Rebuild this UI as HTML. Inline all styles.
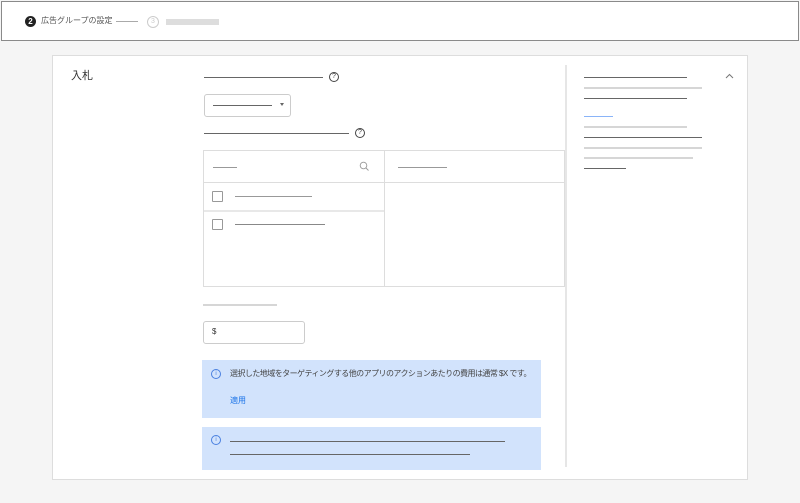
<!DOCTYPE html><html><head><meta charset="utf-8"><style>
*{margin:0;padding:0;box-sizing:border-box}
body{width:800px;height:503px;background:#f5f5f5;position:relative;overflow:hidden;font-family:"Liberation Sans","Noto Sans CJK JP",sans-serif}
.a{position:absolute}
.l{position:absolute;height:1px;background:#666}
.g{position:absolute;height:2px;background:#d6d6d6}
</style></head><body>
<div class="a" style="left:1px;top:1px;width:798px;height:40px;background:#fff;border:1px solid #8a8a8a"></div>
<div class="a" style="left:25px;top:16px;width:11px;height:11px;border-radius:50%;background:#222;color:#fff;font-size:8px;font-weight:bold;text-align:center;line-height:11px">2</div>
<div class="a" style="left:41px;top:15px;font-size:8px;color:#555;white-space:nowrap">広告グループの設定</div>
<div class="a" style="left:116px;top:21px;width:22px;height:1px;background:#aaa"></div>
<div class="a" style="left:147px;top:16px;width:12px;height:12px;border-radius:50%;border:1px solid #ccc;color:#ccc;font-size:7px;text-align:center;line-height:10px">3</div>
<div class="a" style="left:166px;top:19px;width:53px;height:6px;background:#ddd"></div>

<div class="a" style="left:52px;top:55px;width:696px;height:425px;background:#fff;border:1px solid #ddd"></div>
<div class="a" style="left:565px;top:65px;width:2px;height:402px;background:#e6e6e6"></div>
<div class="a" style="left:71px;top:67px;font-size:11px;color:#333">入札</div>

<div class="l" style="left:204px;top:77px;width:119px"></div>
<div class="a" style="left:329px;top:72px;width:10px;height:10px;border-radius:50%;border:1px solid #444;font-size:7px;text-align:center;line-height:8px;color:#444">?</div>
<div class="a" style="left:204px;top:94px;width:87px;height:23px;border:1px solid #ccc;border-radius:3px"></div>
<div class="l" style="left:213px;top:105px;width:59px"></div>
<div class="a" style="left:280px;top:103px;border-left:2px solid transparent;border-right:2px solid transparent;border-top:3px solid #666"></div>
<div class="l" style="left:204px;top:133px;width:145px"></div>
<div class="a" style="left:355px;top:128px;width:10px;height:10px;border-radius:50%;border:1px solid #444;font-size:7px;text-align:center;line-height:8px;color:#444">?</div>

<div class="a" style="left:203px;top:150px;width:362px;height:137px;border:1px solid #ddd"></div>
<div class="a" style="left:203px;top:182px;width:362px;height:1px;background:#ddd"></div>
<div class="a" style="left:384px;top:150px;width:1px;height:137px;background:#ddd"></div>
<div class="a" style="left:204px;top:210px;width:180px;height:2px;background:#e8e8e8"></div>
<div class="a" style="left:213px;top:167px;width:24px;height:1px;background:#999"></div>
<svg class="a" style="left:359px;top:161px" width="11" height="11" viewBox="0 0 11 11"><circle cx="4.5" cy="4.5" r="3.3" fill="none" stroke="#999" stroke-width="0.9"/><path d="M7 7l2.5 2.5" stroke="#999" stroke-width="0.9"/></svg>
<div class="a" style="left:398px;top:167px;width:49px;height:1px;background:#999"></div>
<div class="a" style="left:212px;top:191px;width:11px;height:11px;border:1px solid #999;border-radius:1px"></div>
<div class="a" style="left:235px;top:196px;width:77px;height:1px;background:#999"></div>
<div class="a" style="left:212px;top:219px;width:11px;height:11px;border:1px solid #999;border-radius:1px"></div>
<div class="a" style="left:235px;top:224px;width:90px;height:1px;background:#888"></div>

<div class="g" style="left:203px;top:304px;width:74px"></div>
<div class="a" style="left:203px;top:321px;width:102px;height:23px;border:1px solid #ccc;border-radius:3px"></div>
<div class="a" style="left:212px;top:327px;font-size:8px;color:#333">$</div>

<div class="a" style="left:202px;top:360px;width:339px;height:58px;background:#d2e3fc"></div>
<div class="a" style="left:211px;top:369px;width:10px;height:10px;border-radius:50%;border:1px solid #4a80e0;font-size:6px;line-height:8px;text-align:center;color:#4a80e0">i</div>
<div class="a" style="left:230px;top:368px;font-size:8px;color:#444;white-space:nowrap;letter-spacing:-0.55px">選択した地域をターゲティングする他のアプリのアクションあたりの費用は通常 $X です。</div>
<div class="a" style="left:230px;top:395px;font-size:8px;color:#1a73e8">適用</div>

<div class="a" style="left:202px;top:427px;width:339px;height:43px;background:#d2e3fc"></div>
<div class="a" style="left:211px;top:435px;width:10px;height:10px;border-radius:50%;border:1px solid #4a80e0;font-size:6px;line-height:8px;text-align:center;color:#4a80e0">i</div>
<div class="l" style="left:230px;top:441px;width:275px"></div>
<div class="l" style="left:230px;top:454px;width:240px"></div>

<div class="l" style="left:584px;top:77px;width:103px"></div>
<div class="g" style="left:584px;top:87px;width:118px"></div>
<div class="l" style="left:584px;top:98px;width:103px"></div>
<div class="a" style="left:584px;top:116px;width:29px;height:1px;background:#8ab4f8"></div>
<div class="g" style="left:584px;top:126px;width:103px"></div>
<div class="l" style="left:584px;top:137px;width:118px"></div>
<div class="g" style="left:584px;top:147px;width:118px"></div>
<div class="g" style="left:584px;top:157px;width:109px"></div>
<div class="l" style="left:584px;top:168px;width:42px"></div>
<svg class="a" style="left:725px;top:73px" width="9" height="6" viewBox="0 0 9 6"><path d="M1 5L4.5 1.5L8 5" fill="none" stroke="#777" stroke-width="1"/></svg>
</body></html>
